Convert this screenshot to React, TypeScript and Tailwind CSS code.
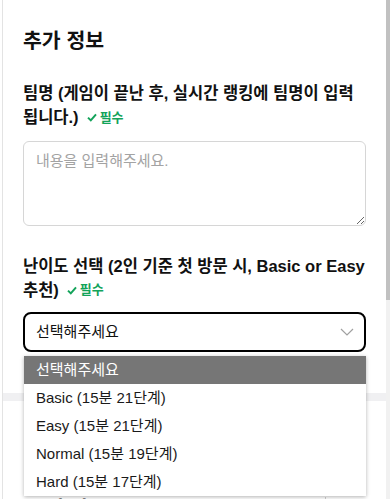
import React from 'react';

const options = ['Basic (15분 21단계)', 'Easy (15분 21단계)', 'Normal (15분 19단계)', 'Hard (15분 17단계)'];

function Required() {
  return (
    <span className="ml-2 inline-flex items-center gap-[3px] align-[1px] text-[13px] font-bold text-[#13a35a]">
      <svg width="10" height="9" viewBox="0 0 10 9" fill="none">
        <path d="M1 4.6 L3.8 7.4 L9 1.4" stroke="#13a35a" strokeWidth="2" />
      </svg>
      필수
    </span>
  );
}

export default function App() {
  return (
    <div
      className="flex h-[499px] w-[390px] overflow-hidden bg-white text-[#111]"
      style={{ fontFamily: '"Liberation Sans", "Noto Sans CJK KR", sans-serif' }}
    >
      <div className="w-[2px]" />
      <div className="w-px bg-[#e3e3e3]" />
      <div className="relative flex-1">
        <section className="px-5 pt-[27px] pb-[41px]">
          <h2 className="text-[20.5px] font-bold leading-[28px]">추가 정보</h2>

          <div className="mt-[26px] break-keep text-[16.5px] font-bold leading-[24px]">
            팀명 (게임이 끝난 후, 실시간 랭킹에 팀명이 입력 됩니다.)
            <Required />
          </div>
          <textarea
            className="mt-[11px] block h-[85px] w-full resize-y rounded-[6px] border border-[#d6d6d6] px-[12px] py-[8px] text-[15px] outline-none placeholder:text-[#a3a3a3]"
            placeholder="내용을 입력해주세요."
          />

          <div className="mt-[28px] break-keep text-[16.5px] font-bold leading-[24px]">
            난이도 선택 (2인 기준 첫 방문 시, Basic or Easy 추천)
            <Required />
          </div>
          <div className="mt-[10px] flex h-[40px] items-center justify-between rounded-[8px] border-2 border-black pl-[11px] pr-[10px] text-[15px]">
            <span>선택해주세요</span>
            <svg width="14" height="8" viewBox="0 0 14 8" fill="none">
              <path d="M1 1 L7 7 L13 1" stroke="#a0a0a0" strokeWidth="1.2" />
            </svg>
          </div>
        </section>

        <div className="h-[8px] bg-[#f0f0f2]" />

        <section className="flex items-start justify-between px-[24px] pt-[94px]">
          <h3 className="text-[20px] font-bold leading-[28px]">운영 정보</h3>
          <div className="mt-[2px] border-l border-[#cfcfcf] pl-3 text-[13px] text-[#555]">변경</div>
        </section>

        {/* open option list of the select */}
        <ul className="absolute top-[356px] left-[21px] w-[342px] bg-white text-[15px] shadow-[0_1px_4px_rgba(0,0,0,0.3)]">
          <li className="flex h-[28px] items-center bg-[#767676] px-[12px] text-white">선택해주세요</li>
          {options.map((o) => (
            <li key={o} className="flex h-[28px] items-center px-[12px] text-[#1a1a1a]">
              {o}
            </li>
          ))}
        </ul>
      </div>
      <div className="flex w-[4px] flex-col bg-[#f1f1f1]">
        <div className="h-[300px] bg-[#c1c1c1]" />
      </div>
    </div>
  );
}
